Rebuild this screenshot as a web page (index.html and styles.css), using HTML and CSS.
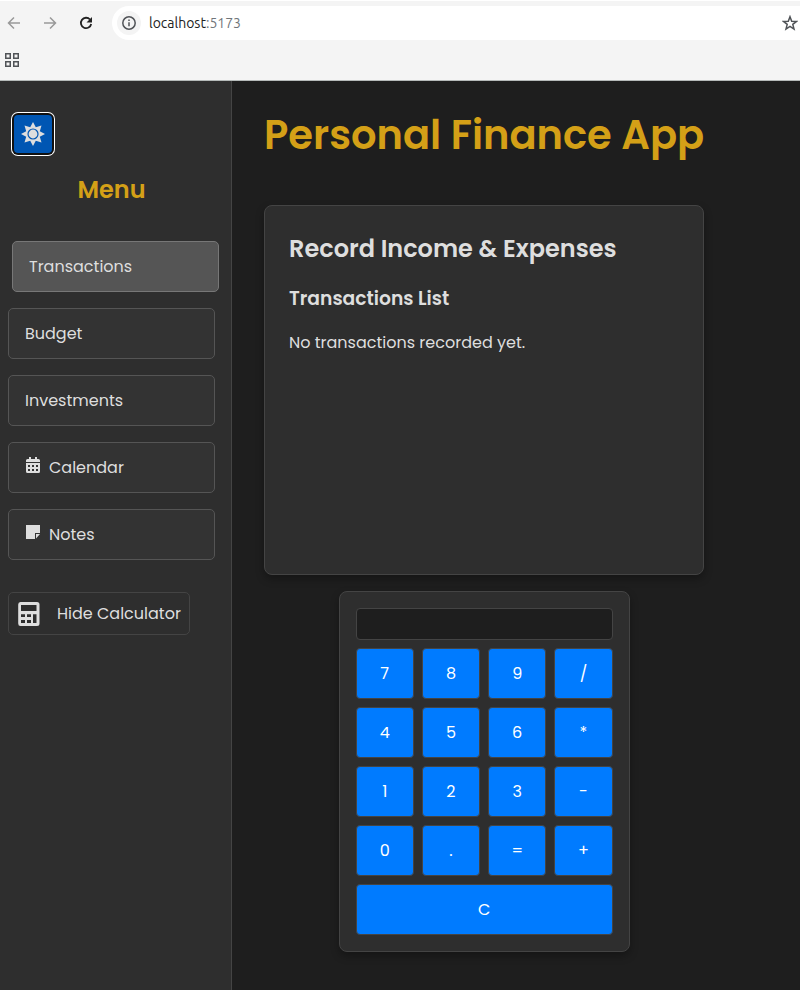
FILE: index.html
```html
<!DOCTYPE html>
<html lang="en">
<head>
<meta charset="utf-8">
<meta name="viewport" content="width=device-width, initial-scale=1">
<title>Personal Finance App</title>
<link rel="stylesheet" href="styles.css">
</head>
<body>
<header class="browser">
  <div class="toolbar">
    <button class="tool muted" type="button" aria-label="Back"><svg width="16" height="16" viewBox="0 0 16 16"><path d="M14 8H3M8 2.500L2.500 8L8 13.500"/></svg></button>
    <button class="tool muted" type="button" aria-label="Forward"><svg width="16" height="16" viewBox="0 0 16 16"><path d="M2 8h11M8 2.500L13.500 8L8 13.500"/></svg></button>
    <button class="tool" type="button" aria-label="Reload"><svg width="16" height="16" viewBox="0 0 16 16"><path class="reload" d="M12 4.500A5.200 5.200 0 1 0 13.200 9"/><path class="reload-head" d="M14 2v5.500H8.500z"/></svg></button>
    <div class="address">
      <button class="site-info" type="button" aria-label="Site information"><svg width="16" height="16" viewBox="0 0 16 16"><circle cx="8" cy="8" r="6.200"/><path d="M8 7.200v4M8 4.500v1.500"/></svg></button>
      <a class="url" href="#">localhost<span class="port">:5173</span></a>
      <button class="bookmark" type="button" aria-label="Bookmark"><svg width="16" height="16" viewBox="0 0 16 16"><path d="M8 1.700l1.700 4.500 4.800.2-3.700 3 1.200 4.700L8 11.400l-4 2.700 1.200-4.700-3.700-3 4.800-.2z"/></svg></button>
    </div>
  </div>
  <div class="bookmarks">
    <button class="apps" type="button" aria-label="Apps"><svg width="14" height="14" viewBox="0 0 14 14"><path d="M.75.75h4.500v4.500h-4.500zM8.750.75h4.500v4.500h-4.500zM.75 8.750h4.500v4.500h-4.500zM8.750 8.750h4.500v4.500h-4.500z"/></svg></button>
  </div>
</header>
<div class="app">
  <aside class="sidebar">
    <button class="theme" type="button" aria-label="Toggle theme"><svg width="24" height="24" viewBox="0 0 24 24"><path fill="#dedede" d="M12 0l2.800 5.200L20.500 3.500 18.800 9.200 24 12l-5.200 2.800 1.700 5.700-5.700-1.700L12 24l-2.800-5.200-5.700 1.700 1.700-5.700L0 12l5.200-2.800L3.500 3.500l5.700 1.700z"/><circle cx="12" cy="12" r="5" fill="#dedede" stroke="#0056b3" stroke-width="1.200"/></svg></button>
    <h2 class="menu-title">Menu</h2>
    <nav class="menu">
      <button class="item active" type="button">Transactions</button>
      <button class="item" type="button">Budget</button>
      <button class="item" type="button">Investments</button>
      <button class="item" type="button"><svg class="item-icon" width="16" height="16" viewBox="0 0 16 16"><path fill="#dedede" fill-rule="evenodd" d="M4 0h2v2h4V0h2v2h1.500Q15 2 15 3.500V5H1V3.500Q1 2 2.500 2H4zM1 6h14v8.500q0 1.500-1.500 1.500h-11Q1 16 1 14.500zM3 8v2h2V8zm4 0v2h2V8zm4 0v2h2V8zM3 12v2h2v-2zm4 0v2h2v-2zm4 0v2h2v-2z"/></svg>Calendar</button>
      <button class="item" type="button"><svg class="item-icon" width="16" height="16" viewBox="0 0 16 16"><path fill="#dedede" d="M1 1h14v8h-5v6H1zM11 10h4l-4 4.500z"/></svg>Notes</button>
    </nav>
    <button class="toggle-calc" type="button"><svg width="24" height="24" viewBox="0 0 24 24"><path fill="#dedede" fill-rule="evenodd" d="M2.500 0h16.500q2.500 0 2.500 2.500v19q0 2.500-2.500 2.500h-16.500q-2.300 0-2.300-2.500v-19q0-2.500 2.300-2.500zM3 3v6h15.500V3zM3 12.300v2.700h4v-2.700zm6 0v2.700h4v-2.700zm6 0v8.700h3.500v-8.700zM3 18v3h4v-3zm6 0v3h4v-3z"/></svg>Hide Calculator</button>
  </aside>
  <main class="content">
    <div class="column">
      <h1 class="title">Personal Finance App</h1>
      <section class="card">
        <h2>Record Income &amp; Expenses</h2>
        <h3>Transactions List</h3>
        <p>No transactions recorded yet.</p>
      </section>
      <section class="calculator" aria-label="Calculator">
        <input class="display" type="text" aria-label="Result" readonly>
        <div class="keys">
          <button type="button">7</button><button type="button">8</button><button type="button">9</button><button type="button">/</button>
          <button type="button">4</button><button type="button">5</button><button type="button">6</button><button type="button">*</button>
          <button type="button">1</button><button type="button">2</button><button type="button">3</button><button type="button">-</button>
          <button type="button">0</button><button type="button">.</button><button type="button">=</button><button type="button">+</button>
          <button class="clear" type="button">C</button>
        </div>
      </section>
    </div>
  </main>
</div>
</body>
</html>
```
FILE: styles.css
```css
* { box-sizing: border-box; }
body {
  margin: 0;
  min-height: 100vh;
  display: flex;
  flex-direction: column;
  background: #1e1e1e;
  color: #dedede;
  font: 16px/24px Poppins, Inter, sans-serif;
}
button { font: inherit; color: inherit; cursor: pointer; }
h1, h2, h3, p { margin: 0; }
h1, h2, h3 { font-weight: 600; }
svg { display: block; flex: none; }

.browser {
  background: #f4f4f4;
  border-top: 1px solid #fff;
  border-bottom: 1px solid #b5bab9;
}
.browser button { border: 0; padding: 0; background: none; }
.browser svg { fill: none; stroke: #505357; stroke-width: 1.5; }
.toolbar { display: flex; align-items: center; gap: 20px; padding: 5px 0 0 6px; }
.toolbar .muted svg { stroke: #999; }
.toolbar .reload { stroke: #222; stroke-width: 1.8; }
.toolbar .reload-head { fill: #222; stroke: none; }
.address {
  flex: 1;
  display: flex;
  align-items: center;
  height: 34px;
  margin-left: -2px;
  padding-left: 5px;
  background: #fff;
  border-radius: 17px 0 0 17px;
}
.browser .site-info {
  display: grid;
  place-items: center;
  width: 24px;
  height: 24px;
  border-radius: 50%;
  background: #f4f4f4;
}
.url {
  flex: 1;
  margin-left: 8px;
  font: 14px/20px Ubuntu, "Noto Sans", sans-serif;
  color: #222;
  text-decoration: none;
}
.port { color: #70757a; }
.bookmark { margin-right: 2px; }
.bookmarks { display: flex; align-items: center; height: 40px; padding: 0 5px; }

.app { flex: 1; display: flex; }
.sidebar {
  flex: none;
  width: 232px;
  padding: 34px 16px 16px 8px;
  background: #2e2e2e;
  border-right: 1px solid #444;
}
.theme {
  display: grid;
  place-items: center;
  width: 38px;
  height: 38px;
  margin: 0 6px;
  padding: 0;
  border: 0;
  border-radius: 4px;
  background: #0056b3;
  box-shadow: 0 0 0 2px #101010, 0 0 0 3px #fff;
}
.menu-title {
  margin: 19px 0 33px;
  font-size: 24px;
  line-height: 36px;
  text-align: center;
  color: #d4a017;
}
.menu { display: flex; flex-direction: column; gap: 16px; }
.item {
  display: flex;
  align-items: center;
  height: 51px;
  padding: 0 16px;
  border: 1px solid #555;
  border-radius: 5px;
  background: #333;
  text-align: left;
}
.item.active { margin: 0 -4px 0 4px; background: #555; border-color: #777; }
.item-icon { margin: 0 8px 6px 0; }
.toggle-calc {
  display: flex;
  align-items: center;
  gap: 15px;
  height: 43px;
  margin-top: 32px;
  padding: 0 8px 0 9px;
  border: 1px solid #444;
  border-radius: 5px;
  background: none;
}

.content { flex: 1; padding: 24px 32px; }
.column { display: flex; flex-direction: column; width: fit-content; }
.title {
  margin-bottom: 40px;
  font-size: 40px;
  line-height: 60px;
  color: #d4a017;
}
.card {
  min-height: 370px;
  padding: 24px;
  border: 1px solid #444;
  border-radius: 8px;
  background: #2e2e2e;
  box-shadow: 0 4px 8px rgba(0, 0, 0, 0.3);
}
.card h2 { margin-bottom: 17px; font-size: 24px; line-height: 38px; }
.card h3 { margin-bottom: 18px; line-height: 28px; }
.calculator {
  align-self: center;
  width: 291px;
  margin-top: 16px;
  padding: 16px;
  border: 1px solid #444;
  border-radius: 8px;
  background: #2e2e2e;
  box-shadow: 0 4px 8px rgba(0, 0, 0, 0.3);
}
.display {
  display: block;
  width: 100%;
  height: 32px;
  margin-bottom: 8px;
  border: 1px solid #444;
  border-radius: 4px;
  background: #1e1e1e;
  color: #dedede;
  font: inherit;
}
.keys { display: grid; grid-template-columns: repeat(4, 1fr); gap: 8px; }
.keys button {
  height: 51px;
  padding: 0;
  border: 1px solid #444;
  border-radius: 4px;
  background: #007bff;
  color: #fff;
}
.keys .clear { grid-column: 1 / -1; }
```
